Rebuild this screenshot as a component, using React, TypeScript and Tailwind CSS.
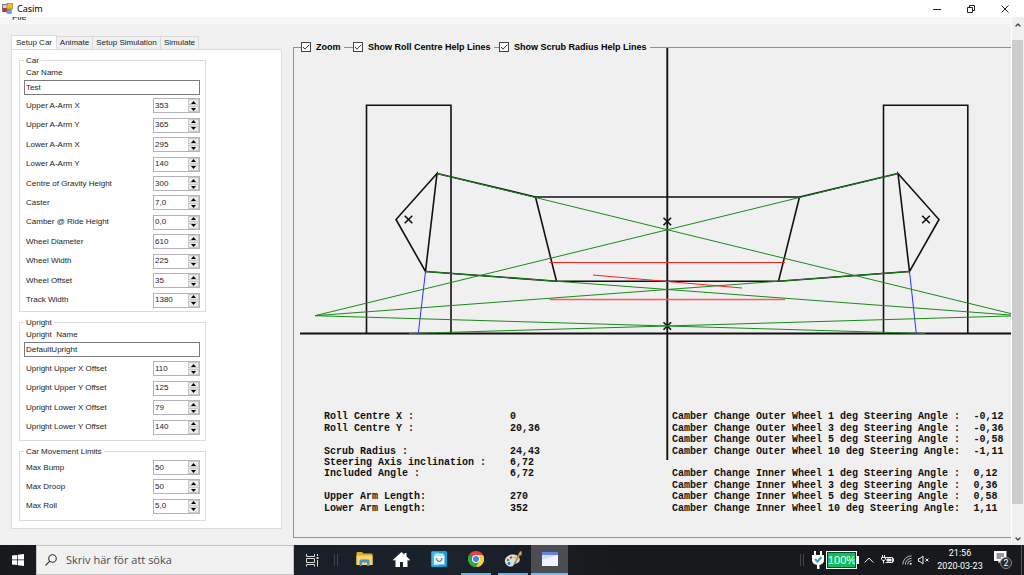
import type { ReactNode } from "react"
import { ChevronDown, ChevronUp } from "lucide-react"

interface Field {
  label: string
  value: string
}

const carFields: Field[] = [
  { label: "Upper A-Arm X", value: "353" },
  { label: "Upper A-Arm Y", value: "365" },
  { label: "Lower A-Arm X", value: "295" },
  { label: "Lower A-Arm Y", value: "140" },
  { label: "Centre of Gravity Height", value: "300" },
  { label: "Caster", value: "7,0" },
  { label: "Camber @ Ride Height", value: "0,0" },
  { label: "Wheel Diameter", value: "610" },
  { label: "Wheel Width", value: "225" },
  { label: "Wheel Offset", value: "35" },
  { label: "Track Width", value: "1380" },
]

const uprightFields: Field[] = [
  { label: "Upright Upper X Offset", value: "110" },
  { label: "Upright Upper Y Offset", value: "125" },
  { label: "Upright Lower X Offset", value: "79" },
  { label: "Upright Lower Y Offset", value: "140" },
]

const limitFields: Field[] = [
  { label: "Max Bump", value: "50" },
  { label: "Max Droop", value: "50" },
  { label: "Max Roll", value: "5,0" },
]

// null is an empty line between two groups
const geometry: (Field | null)[] = [
  { label: "Roll Centre X :", value: "0" },
  { label: "Roll Centre Y :", value: "20,36" },
  null,
  { label: "Scrub Radius :", value: "24,43" },
  { label: "Steering Axis inclination :", value: "6,72" },
  { label: "Included Angle :", value: "6,72" },
  null,
  { label: "Upper Arm Length:", value: "270" },
  { label: "Lower Arm Length:", value: "352" },
]

const camber: (Field | null)[] = [
  { label: "Camber Change Outer Wheel 1 deg Steering Angle :", value: "-0,12" },
  { label: "Camber Change Outer Wheel 3 deg Steering Angle :", value: "-0,36" },
  { label: "Camber Change Outer Wheel 5 deg Steering Angle :", value: "-0,58" },
  { label: "Camber Change Outer Wheel 10 deg Steering Angle:", value: "-1,11" },
  null,
  { label: "Camber Change Inner Wheel 1 deg Steering Angle :", value: "0,12" },
  { label: "Camber Change Inner Wheel 3 deg Steering Angle :", value: "0,36" },
  { label: "Camber Change Inner Wheel 5 deg Steering Angle :", value: "0,58" },
  { label: "Camber Change Inner Wheel 10 deg Steering Angle:", value: "1,11" },
]

function TitleBar() {
  return (
    <header className="flex h-[17px] shrink-0 items-center bg-white pr-0.5 pl-0.5">
      <svg viewBox="0 0 11 11" className="h-[11px] w-[11px]" aria-hidden="true">
        <rect x="0.5" y="1.5" width="7" height="7" fill="#c9d3e6" stroke="#777" />
        <rect x="1" y="5" width="4" height="4" fill="#c8322c" />
        <rect x="5" y="0.5" width="5.5" height="5.5" fill="#f2bd2c" stroke="#a8821c" strokeWidth="0.7" />
        <rect x="5" y="6.5" width="4.5" height="4" fill="#6d9ff0" stroke="#4a78c8" strokeWidth="0.5" />
      </svg>
      <h1 className="ml-1 flex-1 font-['Noto_Sans',sans-serif] text-[9px] leading-3 text-black">Casim</h1>
      <div className="flex">
        <button aria-label="Minimize" className="flex h-4 w-[34px] items-center justify-center">
          <svg viewBox="0 0 10 10" className="h-2.5 w-2.5" stroke="#222">
            <path d="M1 5.5H9" />
          </svg>
        </button>
        <button aria-label="Restore" className="flex h-4 w-[34px] items-center justify-center">
          <svg viewBox="0 0 10 10" className="h-2.5 w-2.5" fill="none" stroke="#222">
            <path d="M1.5 3.5H6.5V8.5H1.5ZM3.5 3.5V1.5H8.5V6.5H6.5" />
          </svg>
        </button>
        <button aria-label="Close" className="flex h-4 w-[34px] items-center justify-center">
          <svg viewBox="0 0 10 10" className="h-2.5 w-2.5" stroke="#222">
            <path d="M1.5 1.5L8.5 8.5M8.5 1.5L1.5 8.5" />
          </svg>
        </button>
      </div>
    </header>
  )
}

function NumberField({ label, value }: Field) {
  const id = label.replace(/\W+/g, "-").toLowerCase()
  return (
    <div className="flex items-center justify-between pr-[5px] pl-1.5">
      <label htmlFor={id}>{label}</label>
      <div className="flex h-[15px] w-[47px] border border-[#b4b4b8] bg-white">
        <input id={id} defaultValue={value} className="w-[34px] pl-px leading-3 outline-none" />
        <div className="flex flex-1 flex-col gap-px bg-[#e4e4e4]">
          <button aria-label={`Increase ${label}`} className="flex flex-1 items-center justify-center border border-[#cacaca] bg-[#ececec]">
            <svg viewBox="0 0 5 3" className="h-[3px] w-[5px]">
              <path d="M0 3L2.5 0L5 3Z" />
            </svg>
          </button>
          <button aria-label={`Decrease ${label}`} className="flex flex-1 items-center justify-center border border-[#cacaca] bg-[#ececec]">
            <svg viewBox="0 0 5 3" className="h-[3px] w-[5px]">
              <path d="M0 0L2.5 3L5 0Z" />
            </svg>
          </button>
        </div>
      </div>
    </div>
  )
}

function NameField({ id, label, value }: Field & { id: string }) {
  return (
    <div className="pr-[5px] pl-1">
      <label htmlFor={id} className="block pl-0.5 leading-3 whitespace-pre">{label}</label>
      <input id={id} defaultValue={value} className="mt-px block h-[15px] w-full border border-[#7a7a7a] bg-white pl-px outline-none" />
    </div>
  )
}

function GroupBox({ title, children }: { title: string; children: ReactNode }) {
  return (
    <section className="border border-[#dcdcdc]">
      <h2 className="-mt-1.5 ml-1 w-fit bg-white px-0.5 leading-3">{title}</h2>
      {children}
    </section>
  )
}

function SetupPanel() {
  return (
    <aside className="flex w-[271px] shrink-0 flex-col text-[8px] text-[#1c1c24]">
      <div role="tablist" className="flex items-end">
        <button role="tab" aria-selected="true" className="-mb-px h-[15px] w-[46px] border border-b-0 border-[#dcdcdc] bg-white">Setup Car</button>
        <button role="tab" aria-selected="false" className="h-[13px] w-9 border-t border-r border-[#d9d9d9]">Animate</button>
        <button role="tab" aria-selected="false" className="h-[13px] w-[68px] border-t border-r border-[#d9d9d9]">Setup Simulation</button>
        <button role="tab" aria-selected="false" className="h-[13px] w-[38px] border-t border-r border-[#d9d9d9]">Simulate</button>
      </div>
      <div role="tabpanel" className="flex flex-col gap-[10px] border border-[#dcdcdc] bg-white pt-[10px] pr-[75px] pb-[7px] pl-[7px]">
        <GroupBox title="Car">
          <NameField id="car-name" label="Car Name" value="Test" />
          <div className="mt-px mb-px grid h-[214px] auto-rows-fr">
            {carFields.map((field) => (
              <NumberField key={field.label} {...field} />
            ))}
          </div>
        </GroupBox>
        <GroupBox title="Upright">
          <NameField id="upright-name" label="Upright  Name" value="DefaultUpright" />
          <div className="mt-0.5 mb-[3px] grid h-[78px] auto-rows-fr">
            {uprightFields.map((field) => (
              <NumberField key={field.label} {...field} />
            ))}
          </div>
        </GroupBox>
        <GroupBox title="Car Movement Limits">
          <div className="mb-1 grid h-[58px] auto-rows-fr">
            {limitFields.map((field) => (
              <NumberField key={field.label} {...field} />
            ))}
          </div>
        </GroupBox>
      </div>
    </aside>
  )
}

// Front view of the suspension with its construction lines
function SuspensionDrawing() {
  return (
    <svg viewBox="294 48 718 413" className="h-[413px] w-[718px] max-w-none [grid-area:1/1]" fill="none" role="img" aria-label="Suspension front view">
      <g stroke="#111" strokeWidth="1.6">
        <path d="M366.5 333.5V105.3H451V333.5M883.5 333.5V105.3H967.8V333.5" />
        <path d="M300 333.5H1012M667.3 48V460" strokeWidth="1.9" />
        <path d="M437 173.5L396 219.5L425.5 271.5ZM898 173.5L939 219.5L909.5 271.5Z" />
        <path d="M535.5 197H799.5L778.5 281.3H556.5Z" />
        <path d="M437 173.5L535.5 197M898 173.5L799.5 197M425.5 271.5L556.5 281.3M909.5 271.5L778.5 281.3" />
        <path d="M404.7 215.7l7.6 7.6m0 -7.6l-7.6 7.6M922.2 215.7l7.6 7.6m0 -7.6l-7.6 7.6M663.5 217.7l7.6 7.6m0 -7.6l-7.6 7.6M663.5 322.2l7.6 7.6m0 -7.6l-7.6 7.6" />
      </g>
      <g stroke="#ff2020">
        <path d="M549.5 262.5H785" />
        <path d="M549.5 299.5H785" stroke="#ff5a5a" strokeWidth="1.3" />
        <path d="M593 275L742 288" />
      </g>
      <path d="M425.5 271.5L418.3 333.5M909.5 271.5L916.3 333.5" stroke="#3030ff" />
      <g stroke="#1a8a1a">
        <path d="M315 315.7L898 173.5M1019.5 315.7L437 173.5" />
        <path d="M315 315.7L909.5 271.5M1019.5 315.7L425.5 271.5" />
        <path d="M315 315.7L925 333.5M1019.5 315.7L409 333.5" />
      </g>
    </svg>
  )
}

function Readout({ rows, labelWidth }: { rows: (Field | null)[]; labelWidth: string }) {
  return (
    <table className="h-[103px] table-fixed">
      <tbody>
        {rows.map((row, i) => (
          <tr key={i}>
            <th scope="row" className={`${labelWidth} p-0 text-left whitespace-pre`}>{row?.label ?? "\u00a0"}</th>
            <td className="w-10 p-0">{row?.value}</td>
          </tr>
        ))}
      </tbody>
    </table>
  )
}

function CheckOption({ label, width }: { label: string; width: string }) {
  return (
    <label className={`${width} flex h-3 items-center gap-[5px] bg-[#f0f0f0] whitespace-nowrap`}>
      <span className="grid">
        <input type="checkbox" defaultChecked className="peer h-2.5 w-2.5 appearance-none border border-[#444] bg-white [grid-area:1/1]" />
        <svg viewBox="0 0 10 10" className="pointer-events-none hidden h-2.5 w-2.5 [grid-area:1/1] peer-checked:block" fill="none" stroke="#333">
          <path d="M2 5L4 7.2L8.2 2.8" />
        </svg>
      </span>
      {label}
    </label>
  )
}

function DrawingPanel() {
  return (
    <section className="relative min-w-0 flex-1 border-y border-l border-[#909090]">
      <div className="absolute -top-[7px] left-[7px] flex font-['Liberation_Sans',sans-serif] text-[9px] leading-3 font-bold text-black">
        <CheckOption label="Zoom" width="w-[43px] mr-[9px]" />
        <CheckOption label="Show Roll Centre Help Lines" width="w-[141px] mr-[5px]" />
        <CheckOption label="Show Scrub Radius Help Lines" width="w-[151px]" />
      </div>
      <div className="grid h-full overflow-hidden">
        <SuspensionDrawing />
        <div className="mb-[23px] ml-[30px] flex self-end font-['Liberation_Mono',monospace] text-[10px] leading-[11px] font-bold text-[#111] [grid-area:1/1]">
          <div className="w-[348px] shrink-0">
            <Readout rows={geometry} labelWidth="w-[186px]" />
          </div>
          <Readout rows={camber} labelWidth="w-[304px]" />
        </div>
      </div>
    </section>
  )
}

function ScrollBar() {
  return (
    <div className="flex w-[13px] shrink-0 flex-col border-l border-white bg-[#f0f0f0] text-[#444]">
      <button aria-label="Scroll up" className="flex h-[23px] items-center justify-center pb-2">
        <ChevronUp className="h-2 w-2" strokeWidth={4} />
      </button>
      <div className="mr-px flex-1 bg-[#cdcdcd]" />
      <button aria-label="Scroll down" className="flex h-[41px] items-end justify-center pb-0.5">
        <ChevronDown className="h-2 w-2" strokeWidth={4} />
      </button>
    </div>
  )
}

function TaskButton({ label, state = "w-[30px] border-transparent", children }: { label: string; state?: string; children: ReactNode }) {
  return (
    <button aria-label={label} className="flex h-full w-[37px] justify-center">
      <span className={`flex h-full items-center justify-center border-b-2 ${state}`}>{children}</span>
    </button>
  )
}

function TaskBar() {
  return (
    <footer className="flex h-[30px] shrink-0 items-center bg-gradient-to-r from-[#17191d] via-[#1a222c] via-45% to-[#18191c] to-60% text-white">
      <button aria-label="Start" className="flex h-full w-9 items-center justify-center">
        <svg viewBox="0 0 12 12" className="h-3 w-3" fill="#fff">
          <path d="M0 1.6L5.2 0.9V5.6H0ZM5.9 0.8L12 0V5.6H5.9ZM0 6.3H5.2V11.1L0 10.4ZM5.9 6.3H12V12L5.9 11.2Z" />
        </svg>
      </button>
      <label className="flex h-full w-[258px] items-center gap-[9px] border border-[#c4c4c4] bg-[#f1f1f1] pl-2">
        <svg viewBox="0 0 12 12" className="h-3 w-3" fill="none" stroke="#333" strokeWidth="1.1">
          <circle cx="7.5" cy="4.5" r="3.8" />
          <path d="M4.8 7.2L0.5 11.5" />
        </svg>
        <input
          aria-label="Sök"
          placeholder="Skriv här för att söka"
          className="min-w-0 flex-1 font-['Open_Sans',sans-serif] text-[11px] outline-none placeholder:text-[#4c4c4c]"
        />
      </label>
      <button aria-label="Task view" className="flex h-full w-9 items-center justify-center">
        <svg viewBox="0 0 14 14" className="h-3.5 w-3.5" fill="none" stroke="#ddd">
          <path d="M1.5 1V3.5H9.5V1M1.5 5.5H9.5V9.5H1.5ZM1.5 13.5V11.5H9.5V13.5M12.5 1V3M12.5 7V13.5" />
          <path d="M11.5 5H13.5" strokeWidth="2" />
        </svg>
      </button>
      <div className="mx-1 h-3 w-1 border-x border-[#41464d]" />
      <nav className="ml-1 flex h-full" aria-label="Taskbar">
        <TaskButton label="File Explorer">
          <svg viewBox="0 0 17 14" className="h-3.5 w-[17px]">
            <path d="M0.5 1Q0.5 0 1.5 0H6L7.5 1.5H15.5Q16.5 1.5 16.5 2.5V13H0.5Z" fill="#e5a823" />
            <path d="M0.5 3.5H16.5V13H0.5Z" fill="#fbd567" />
            <path d="M3.5 14V9Q3.5 7.5 5 7.5H12Q13.5 7.5 13.5 9V14H11V10.5H6V14Z" fill="#3f94d6" />
          </svg>
        </TaskButton>
        <TaskButton label="Home">
          <svg viewBox="0 0 17 15" className="h-[15px] w-[17px]" fill="#fff">
            <path d="M8.5 0L11.5 2.7V1H13.5V4.5L17 7.7L16 8.8L14.5 7.7V15H10V10H7V15H2.5V7.7L1 8.8L0 7.7Z" />
          </svg>
        </TaskButton>
        <TaskButton label="Store">
          <svg viewBox="0 0 16 16" className="h-4 w-4" fill="none">
            <rect width="16" height="16" rx="1.5" fill="#149fd8" />
            <path d="M1 1H8V15H1Z" fill="#35bdf0" />
            <rect x="3" y="4.5" width="10.5" height="9" fill="#f4f4f4" />
            <path d="M3 4.5L5 2.5H12L13.5 4.5" fill="#cfe9f5" />
            <path d="M5.5 7Q6 10.5 8.2 10.5Q10.5 10.5 11 7" stroke="#3a8eb8" strokeWidth="1.2" />
          </svg>
        </TaskButton>
        <TaskButton label="Chrome" state="w-[30px] border-[#6cb0ea]">
          <svg viewBox="0 0 16 16" className="h-4 w-4">
            <path d="M8 8L1.07 4A8 8 0 0 1 14.93 4Z" fill="#e24435" />
            <path d="M8 8L14.93 4A8 8 0 0 1 8 16Z" fill="#fccd35" />
            <path d="M8 8L8 16A8 8 0 0 1 1.07 4Z" fill="#31a350" />
            <path d="M8 4H14.93A8 8 0 0 1 8 16L11.5 10Z" fill="#fccd35" />
            <path d="M1.07 4L4.5 10L8 12L11.5 10L8 16A8 8 0 0 1 1.07 4Z" fill="#31a350" />
            <circle cx="8" cy="8" r="4" fill="#fff" />
            <circle cx="8" cy="8" r="3" fill="#4285f4" />
          </svg>
        </TaskButton>
        <TaskButton label="Paint" state="w-[30px] border-[#6cb0ea]">
          <svg viewBox="0 0 18 17" className="h-[17px] w-[18px]">
            <path d="M1 11C0 7 4 3.5 9 3.5C14 3.5 16.5 6.5 15.5 10C14.5 13 10 12 9.5 14C9 16.5 2.5 16.5 1 11Z" fill="#cfe2ee" />
            <circle cx="4" cy="9" r="1.3" fill="#35a853" />
            <circle cx="7" cy="6.5" r="1.3" fill="#d94235" />
            <circle cx="11" cy="6.5" r="1.3" fill="#f0b429" />
            <circle cx="5" cy="12.5" r="1.4" fill="#2f6fc9" />
            <path d="M16.8 0.5L10.5 13" stroke="#c77f35" strokeWidth="1.7" />
            <path d="M14.5 3L17.5 0L17.5 5Z" fill="#e0a867" />
          </svg>
        </TaskButton>
        <TaskButton label="Casim" state="w-full border-[#76b9ed] bg-[#4b4d52]">
          <svg viewBox="0 0 16 14" className="h-3.5 w-4">
            <rect width="16" height="14" fill="#e9effb" />
            <path d="M0 3H16V14H0Z" fill="#d4dff5" />
            <path d="M0 8L16 3V14H0Z" fill="#f1f4fc" />
            <rect width="16" height="3" fill="#5f86dc" />
          </svg>
        </TaskButton>
      </nav>
      <div className="ml-auto flex h-full items-center">
        <div className="h-3 w-1 border-x border-[#43454a]" />
        <svg viewBox="0 0 12 18" className="ml-2 h-[18px] w-3" fill="#fff" aria-hidden="true">
          <path d="M2 0H4V4H8V0H10V4H12V9Q12 13 7.5 14V18H5V14Q0 13 0 9V4H2Z" />
          <path d="M3 8L5.5 10.5L9.5 6" fill="none" stroke="#1ea3c4" strokeWidth="2" />
        </svg>
        <div className="ml-0.5 h-[18px] w-[31px] border-2 border-white bg-[#11bd5c] text-center font-['Liberation_Sans',sans-serif] text-[11px] leading-[15px] outline-1 -outline-offset-2 outline-[#143]">
          100%
        </div>
        <div className="h-2 w-0.5 bg-white" />
        <button aria-label="Show hidden icons" className="ml-[5px]">
          <svg viewBox="0 0 10 6" className="h-1.5 w-2.5" fill="none" stroke="#eee">
            <path d="M0.7 5.5L5 1L9.3 5.5" />
          </svg>
        </button>
        <svg viewBox="0 0 13 10" className="ml-[7px] h-2.5 w-[13px]" fill="none" stroke="#eee" aria-hidden="true">
          <path d="M4.5 2.5H11.5V7.5H4.5" />
          <path d="M6 4H10V6H6ZM12 4H13V6H12Z" fill="#eee" />
          <path d="M1.5 0V2M3.5 0V2M0.5 2.5H4.5V4L3.5 5.5H1.5L0.5 4ZM2.5 5.5V8.5" />
        </svg>
        <svg viewBox="0 0 10 10" className="ml-2 h-2.5 w-2.5" fill="none" stroke="#ccc" strokeWidth="0.9" aria-hidden="true">
          <path d="M0.8 9.5A8.7 8.7 0 0 1 9.5 0.8M3.3 9.5A6.2 6.2 0 0 1 9.5 3.3M5.6 9.5A3.9 3.9 0 0 1 9.5 5.6" />
          <circle cx="8.7" cy="8.7" r="1" fill="#eee" stroke="none" />
        </svg>
        <svg viewBox="0 0 11 10" className="ml-1.5 h-2.5 w-[11px]" fill="none" stroke="#eee" aria-hidden="true">
          <path d="M0.5 3.5H2L5 1V9L2 6.5H0.5ZM7.5 3.5L10.5 6.5M10.5 3.5L7.5 6.5" />
        </svg>
        <time dateTime="2020-03-23T21:56" className="ml-2 w-[46px] text-center font-['Roboto',sans-serif] text-[9px] leading-[13px] whitespace-nowrap">
          21:56
          <br />
          2020-03-23
        </time>
        <button aria-label="Notifications" className="relative ml-[11px] flex h-[18px] w-[18px] items-start">
          <svg viewBox="0 0 13 13" className="h-[13px] w-[13px]">
            <path d="M0 0H12.5V10H7L4.5 12.5V10H0Z" fill="#fff" />
            <path d="M2.5 3H10M2.5 5H10M2.5 7H7" stroke="#1b1c1f" strokeWidth="0.9" />
          </svg>
          <span className="absolute right-0 bottom-0 h-3 w-3 rounded-full border border-[#888] bg-[#26282b] font-['Roboto',sans-serif] text-[9px] leading-[10px]">2</span>
        </button>
        <div className="mr-0.5 ml-[9px] h-full w-px bg-[#55575a]" />
      </div>
    </footer>
  )
}

export default function App() {
  return (
    <div className="flex min-h-screen flex-col bg-[#f0f0f0] font-['Liberation_Sans',sans-serif]">
      <TitleBar />
      <div className="flex flex-1">
        <main className="flex min-w-0 flex-1 flex-col">
          <div className="flex h-[7px] overflow-hidden bg-[#f7f7f7] pl-3">
            <button className="h-0 text-[9px] leading-[0px] text-[#222]">File</button>
          </div>
          <div className="flex flex-1 gap-[11px] pl-[11px]">
            <div className="pt-[11px] pb-4">
              <SetupPanel />
            </div>
            <div className="flex min-w-0 flex-1 pt-[23px] pb-[7px]">
              <DrawingPanel />
            </div>
          </div>
        </main>
        <ScrollBar />
      </div>
      <TaskBar />
    </div>
  )
}
